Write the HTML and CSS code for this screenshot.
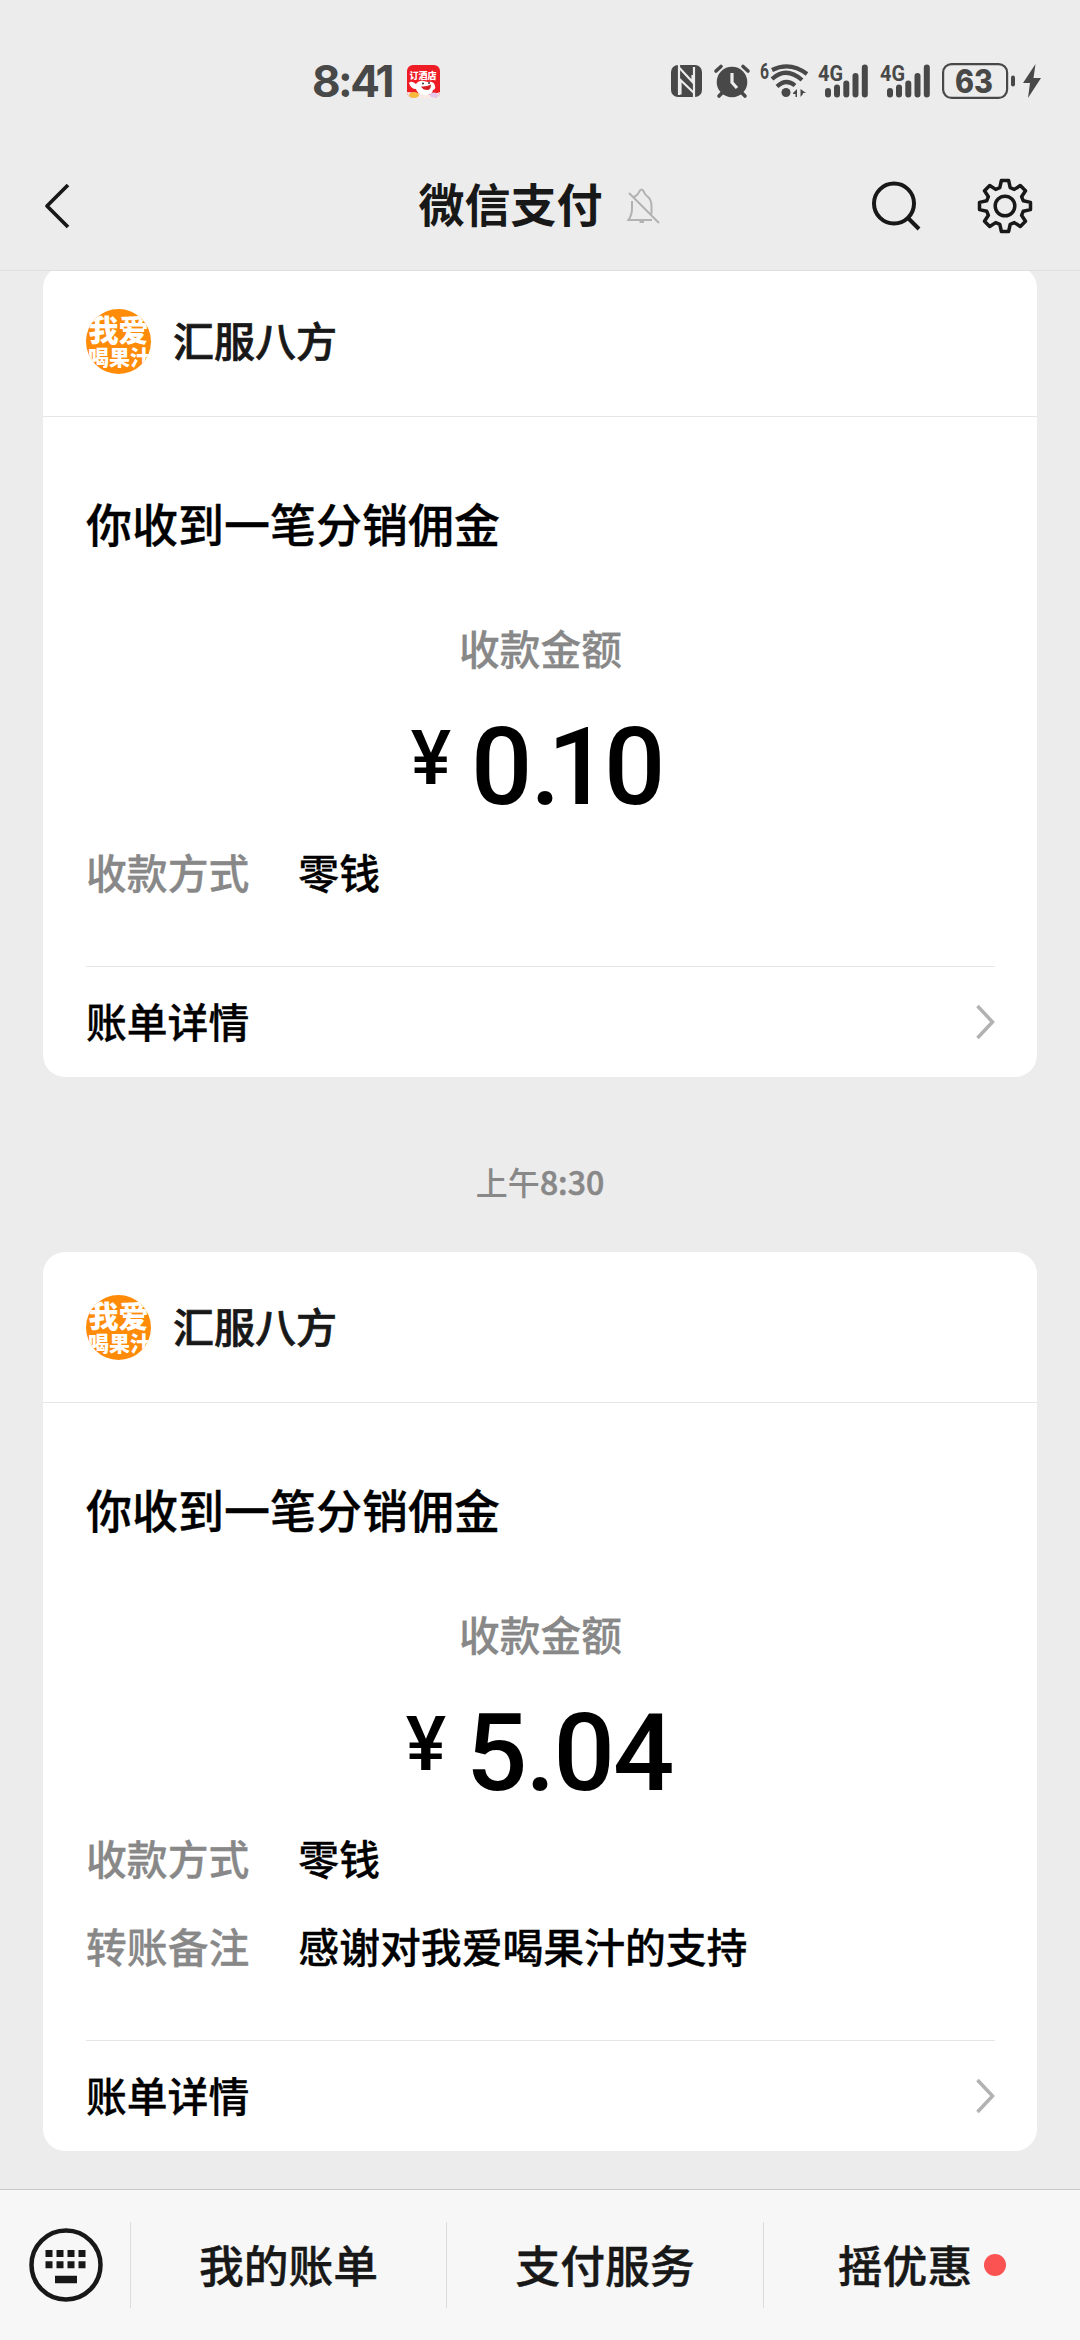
FILE: index.html
```html
<!DOCTYPE html>
<html lang="zh-CN">
<head>
<meta charset="utf-8">
<title>微信支付</title>
<link rel="stylesheet" href="styles.css">
</head>
<body>
<div class="screen">
  <header class="top">
    <div class="status">
      <div class="status-left">
        <span class="clock">8:41</span>
        <svg width="33" height="33" viewBox="0 0 33 33">
          <clipPath id="app"><rect width="33" height="33" rx="6"/></clipPath>
          <g clip-path="url(#app)">
            <rect width="33" height="33" fill="#ee1c24"/>
            <path d="M0 27L10 28L25 30L33 27V33H0Z" fill="#fbe9e6"/>
            <path d="M2 18Q4 15 9 19Q12 15 17 16L21 17Q27 16 28 21Q29 24 26 25Q25 31 17 30Q10 29 9 24Q4 24 2 18Z" fill="#fff"/>
            <path d="M14 21.500Q20 22 24 19.500Q24 25 20 25Q16 25 14 21.500Z" fill="#d51f26"/>
            <circle cx="16" cy="18.500" r="0.900" fill="#222"/><circle cx="22" cy="18" r="0.900" fill="#222"/>
            <ellipse cx="7" cy="30" rx="5" ry="3" fill="#f6b93b"/><ellipse cx="27" cy="30" rx="4" ry="2.500" fill="#e3c8ee"/>
            <text class="logo" x="16" y="13.500" font-size="9" text-anchor="middle">订酒店</text>
          </g>
        </svg>
      </div>
      <div class="status-right">
        <svg class="nfc" width="31" height="32" viewBox="0 0 31 32">
          <rect width="31" height="32" rx="7" fill="#484848"/>
          <path d="M8 0V30M23 2V32" stroke="#ececec" stroke-width="2.200" fill="none"/>
          <path d="M8.500 3L21.500 17V10M9.500 29.500V15L22.500 27.500" fill="none" stroke="#ececec" stroke-width="2.200"/>
        </svg>
        <svg class="alarm" width="36" height="34" viewBox="0 0 36 34">
          <circle cx="18" cy="18" r="15.300" fill="#484848"/>
          <path d="M2 7L7 2.500M34 7L29 2.500M5 32L9 28M31 32L27 28" stroke="#484848" stroke-width="3.600" stroke-linecap="round"/>
          <path d="M18 9V18.500L23 24" fill="none" stroke="#ececec" stroke-width="3.200"/>
        </svg>
        <svg class="wifi" width="48" height="36" viewBox="0 0 48 36">
          <text class="tiny" x="0" y="16" textLength="9" lengthAdjust="spacingAndGlyphs">6</text>
          <g fill="none" stroke="#484848" stroke-width="4.200">
            <path d="M12 7Q30 -2 47 11"/><path d="M12 16Q26 3 42 17"/><path d="M17 23.500Q26 15 35 22.500"/>
          </g>
          <circle cx="26" cy="29.500" r="4.500" fill="#484848"/>
          <path d="M33 30L37 26V34H35.500V31H33ZM40.500 26L46 30H43V31L40.500 34Z" fill="#484848"/>
        </svg>
        <svg class="sig" width="50" height="36" viewBox="0 0 50 36">
          <path d="M10 28V31.500M19 24.500V31.500M28.300 20.500V31.500M37.500 13V31.500M46.800 4.500V31.500" stroke="#484848" stroke-width="6" stroke-linecap="round"/>
          <text class="tiny" x="0" y="18" textLength="25" lengthAdjust="spacingAndGlyphs">4G</text>
        </svg>
        <svg class="sig second" width="50" height="36" viewBox="0 0 50 36">
          <path d="M10 28V31.500M19 24.500V31.500M28.300 20.500V31.500M37.500 13V31.500M46.800 4.500V31.500" stroke="#484848" stroke-width="6" stroke-linecap="round"/>
          <text class="tiny" x="0" y="18" textLength="25" lengthAdjust="spacingAndGlyphs">4G</text>
        </svg>
        <svg class="battery" width="73" height="36" viewBox="0 0 73 36">
          <rect x="1.100" y="1.100" width="64" height="33.800" rx="8.500" fill="none" stroke="#484848" stroke-width="2.200"/>
          <rect x="69" y="12.500" width="4" height="11" rx="2" fill="#484848"/>
          <text class="charge" x="32" y="29.500" text-anchor="middle" textLength="38" lengthAdjust="spacingAndGlyphs">63</text>
        </svg>
        <svg width="18" height="34" viewBox="0 0 18 34"><path d="M12.500 0L0 19H7L5 34L18 14H10.500Z" fill="#484848"/></svg>
      </div>
    </div>
    <nav class="nav">
      <svg class="back" width="28" height="48" viewBox="0 0 28 48"><path d="M25 3L4 24L25 45" fill="none" stroke="#181818" stroke-width="3.700" stroke-linejoin="round"/></svg>
      <div class="nav-title">
        <h1>微信支付</h1>
        <svg class="bell" width="34" height="36" viewBox="0 0 34 36">
          <g fill="none" stroke="#b2b2b2" stroke-width="2">
            <path d="M7 9Q11 7 12 4Q14.500 -1 17 4Q18 7 21 9Q24.500 12 24.500 18V26M5 13V20Q5 27 1.500 32H25M2 5L32 35"/>
            <path d="M12.500 34H17"/>
          </g>
        </svg>
      </div>
      <div class="nav-actions">
        <svg width="50" height="50" viewBox="0 0 50 50"><g fill="none" stroke="#181818" stroke-width="4"><circle cx="23" cy="22.500" r="20"/><path d="M37 37L48 48"/></g></svg>
        <svg width="56" height="56" viewBox="-28 -28 56 56">
          <g fill="none" stroke="#181818" stroke-width="3.500" stroke-linejoin="round">
            <circle r="9.800"/>
            <path d="M-5.200 -18.300L-3.600 -25.500H3.600L5.200 -18.300L9.300 -16.600L15.300 -20.500L20.500 -15.300L16.600 -9.300L18.300 -5.200L25.500 -3.600V3.600L18.300 5.200L16.600 9.300L20.500 15.300L15.300 20.500L9.300 16.600L5.200 18.300L3.600 25.500H-3.600L-5.200 18.300L-9.300 16.600L-15.300 20.500L-20.500 15.300L-16.600 9.300L-18.300 5.200L-25.500 3.600V-3.600L-18.300 -5.200L-16.600 -9.300L-20.500 -15.300L-15.300 -20.500L-9.300 -16.600Z"/>
          </g>
        </svg>
      </div>
    </nav>
  </header>

  <main class="chat">
    <article class="card">
      <div class="merchant"><div class="avatar"><b>我爱</b><small>喝果汁</small></div><span>汇服八方</span></div>
      <div class="body">
        <h2>你收到一笔分销佣金</h2>
        <p class="caption">收款金额</p>
        <p class="amount small-sum"><span class="yen">¥</span><span class="digits">0<span class="point">.</span><span class="one">1</span>0</span></p>
        <dl><dt>收款方式</dt><dd>零钱</dd></dl>
        <div class="more"><span>账单详情</span><svg width="20" height="38" viewBox="0 0 20 38"><path d="M2.500 3L17.500 19L2.500 35" fill="none" stroke="#b2b2b2" stroke-width="3.500"/></svg></div>
      </div>
    </article>
    <time class="stamp">上午<span>8:30</span></time>
    <article class="card">
      <div class="merchant"><div class="avatar"><b>我爱</b><small>喝果汁</small></div><span>汇服八方</span></div>
      <div class="body">
        <h2>你收到一笔分销佣金</h2>
        <p class="caption">收款金额</p>
        <p class="amount"><span class="yen">¥</span><span class="digits">5.04</span></p>
        <dl><dt>收款方式</dt><dd>零钱</dd><dt>转账备注</dt><dd>感谢对我爱喝果汁的支持</dd></dl>
        <div class="more"><span>账单详情</span><svg width="20" height="38" viewBox="0 0 20 38"><path d="M2.500 3L17.500 19L2.500 35" fill="none" stroke="#b2b2b2" stroke-width="3.500"/></svg></div>
      </div>
    </article>
  </main>

  <footer class="menu">
    <div class="keyboard">
      <svg width="74" height="74" viewBox="0 0 74 74">
        <circle cx="37" cy="37" r="34.500" fill="none" stroke="#181818" stroke-width="4.500"/>
        <path d="M16.500 22h7v7h-7zM27.500 22h7v7h-7zM38.500 22h7v7h-7zM49.500 22h7v7h-7zM16.500 33.300h7v7h-7zM27.500 33.300h7v7h-7zM38.500 33.300h7v7h-7zM49.500 33.300h7v7h-7zM26 47.800h22v7.500h-22z" fill="#181818"/>
      </svg>
    </div>
    <div class="item"><span>我的账单</span></div>
    <div class="item"><span>支付服务</span></div>
    <div class="item"><span>摇优惠</span><i class="dot"></i></div>
  </footer>
</div>
</body>
</html>
```

FILE: styles.css
```css
* { box-sizing: border-box; }
body, h1, h2, p, dl, dd { margin: 0; }
body {
  background: #ececec;
  color: #000;
  font-family: "Noto Sans CJK SC", sans-serif;
  font-weight: 500;
}
svg { display: block; flex: none; overflow: visible; }
.screen {
  width: 1080px;
  height: 2340px;
  display: flex;
  flex-direction: column;
  overflow: hidden;
}
.tiny { font: 700 22px Roboto, sans-serif; fill: #484848; }
.logo { font-family: "Noto Sans CJK SC", sans-serif; font-weight: 900; fill: #fff; }
.charge { font: 800 32px Inter, sans-serif; fill: #484848; }

.top { height: 271px; border-bottom: 1px solid #dfdfdf; flex: none; }
.status {
  height: 141px;
  padding: 21px 39px 0 312px;
  display: flex;
  justify-content: space-between;
  align-items: center;
}
.status-left, .status-right { display: flex; align-items: center; }
.status-left { gap: 14px; }
.clock {
  width: 81px;
  font: 700 44px/50px Inter, sans-serif;
  letter-spacing: -2.600px;
  color: #484848;
}
.alarm { margin-left: 12px; }
.wifi, .sig { margin-left: 10px; }
.second, .battery { margin-left: 12px; }
.battery { margin-right: 8px; }

.nav {
  height: 130px;
  padding: 0 47px 0 43px;
  display: grid;
  grid-template-columns: 1fr auto 1fr;
  align-items: center;
}
.nav-title { display: flex; align-items: center; gap: 24px; margin-left: 3px; }
.nav-title h1 { font-size: 46px; line-height: 60px; font-weight: 700; color: #181818; margin-top: -8px; }
.nav-actions { display: flex; align-items: center; justify-content: flex-end; gap: 56px; }

.chat { flex: 1; min-height: 0; padding: 0 43px; overflow: hidden; display: flex; flex-direction: column; }
.card { background: #fff; border-radius: 22px; flex: none; }
.card:first-child { margin-top: -5px; }
.merchant {
  height: 151px;
  padding-left: 43px;
  border-bottom: 1px solid #e6e6e6;
  display: flex;
  align-items: center;
  gap: 22px;
  font-size: 41px;
  line-height: 60px;
  color: #181818;
  -webkit-text-stroke: 0.7px #181818;
}
.merchant span { margin-top: -4px; }
.avatar {
  width: 65px;
  height: 65px;
  padding-top: 2px;
  border-radius: 50%;
  overflow: hidden;
  background: #ff8b08;
  color: #fff;
  display: flex;
  flex-direction: column;
  align-items: center;
  white-space: nowrap;
  -webkit-text-stroke: 0;
}
.avatar b { font-size: 30px; line-height: 34px; font-weight: 900; }
.avatar small { font-size: 21px; line-height: 22px; font-weight: 900; padding-left: 2px; }
.body { padding: 73px 42px 0 43px; }
.body h2 { font-size: 46px; line-height: 64px; font-weight: 500; -webkit-text-stroke: 0.3px #000; }
.caption { margin-top: 66px; font-size: 40.700px; line-height: 56px; color: #888; text-align: center; -webkit-text-stroke: 0.3px; }
.amount {
  height: 128px;
  margin-top: 15px;
  padding-right: 3px;
  display: flex;
  justify-content: center;
  gap: 20px;
  font-family: Roboto, sans-serif;
  font-weight: 500;
}
.yen { font-size: 76px; line-height: 100px; padding-top: 17px; }
.digits { font-size: 108px; line-height: 152px; letter-spacing: -2px; }
.amount.small-sum { padding-right: 7px; }
.digits .point { letter-spacing: -13px; }
.digits .one { letter-spacing: -5px; }
.body dl {
  padding: 25px 0 66px;
  display: grid;
  grid-template-columns: auto 1fr;
  column-gap: 49px;
  row-gap: 32px;
  font-size: 40.850px;
  line-height: 56px;
  -webkit-text-stroke: 0.3px;
}
.body dt { color: #888; }
.more {
  height: 111px;
  border-top: 1px solid #e6e6e6;
  display: flex;
  align-items: center;
  justify-content: space-between;
  font-size: 40.800px;
  -webkit-text-stroke: 0.3px;
}
.more span { margin-top: -4px; }
.stamp {
  height: 175px;
  padding-top: 32px;
  flex: none;
  display: flex;
  justify-content: center;
  align-items: center;
  font-size: 32px;
  line-height: 46px;
  color: #888;
}
.stamp span { -webkit-text-stroke: 0.6px; }

.menu {
  height: 151px;
  flex: none;
  background: #f7f7f7;
  border-top: 1px solid #c8c8c8;
  display: grid;
  grid-template-columns: 130px 316px 317px 317px;
  align-items: center;
}
.keyboard { padding-left: 28.500px; }
.item {
  height: 86px;
  border-left: 1px solid #dcdcdc;
  display: flex;
  align-items: center;
  justify-content: center;
  gap: 12px;
  font-size: 44.800px;
  color: #181818;
  -webkit-text-stroke: 0.4px #181818;
}
.item span { margin-top: -4px; }
.dot { width: 22px; height: 22px; border-radius: 50%; background: #fb5252; }
```
